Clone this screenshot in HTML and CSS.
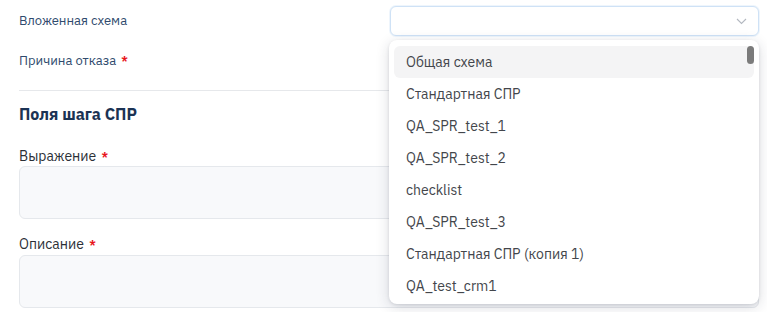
FILE: index.html
```html
<!DOCTYPE html>
<html lang="ru">
<head>
<meta charset="utf-8">
<title>Форма</title>
<link rel="stylesheet" href="styles.css">
</head>
<body>
<div class="page">
  <div class="row row-first">
    <div class="label label-blue">Вложенная схема</div>
    <div class="select">
      <svg class="chevron" width="11" height="7" viewBox="0 0 11 7"><path d="M1 1 L5.5 5.5 L10 1" fill="none" stroke="#b3b8c0" stroke-width="1.1"/></svg>
    </div>
  </div>
  <div class="row row-second">
    <div class="label label-blue">Причина отказа <span class="req">*</span></div>
    <div class="select select-hidden"></div>
  </div>
  <div class="divider"></div>
  <h2 class="heading">Поля шага СПР</h2>
  <div class="field-label">Выражение <span class="req">*</span></div>
  <div class="textbox"></div>
  <div class="field-label field-label-2">Описание <span class="req">*</span></div>
  <div class="textbox"></div>

  <div class="dropdown">
    <div class="item active">Общая схема</div>
    <div class="item">Стандартная СПР</div>
    <div class="item">QA_SPR_test_1</div>
    <div class="item">QA_SPR_test_2</div>
    <div class="item">checklist</div>
    <div class="item">QA_SPR_test_3</div>
    <div class="item">Стандартная СПР (копия 1)</div>
    <div class="item">QA_test_crm1</div>
    <div class="scroll-thumb"></div>
  </div>
</div>
</body>
</html>
```
FILE: styles.css
```css
html, body {
  margin: 0;
  padding: 0;
  background: #ffffff;
  font-family: "IBM Plex Sans", Roboto, "Noto Sans", sans-serif;
  font-size: 13px;
  overflow: hidden;
}
.page {
  position: relative;
  width: 740px;
  padding-left: 19px;
  padding-top: 6px;
  height: 306px;
}
.row {
  display: flex;
  align-items: center;
  height: 30px;
}
.row-second {
  margin-top: 9px;
}
.label {
  width: 371px;
  flex: none;
  line-height: 18px;
}
.label-blue {
  color: #2f4a6d;
}
.req {
  color: #e8141b;
  font-weight: 700;
  font-size: 11px;
  margin-left: 2px;
  vertical-align: 1px;
}
.select {
  position: relative;
  flex: 1;
  height: 28px;
  border: 1px solid #cfe2f6;
  border-radius: 6px;
  background: #fff;
  box-shadow: 0 0 0 1px #eef5fc;
}
.select-hidden {
  border-color: #e4e7eb;
  box-shadow: none;
}
.chevron {
  position: absolute;
  right: 11px;
  top: 11px;
}
.divider {
  margin-top: 15px;
  height: 1px;
  background: #e6e8eb;
}
.heading {
  margin: 13px 0 0;
  font-size: 16px;
  line-height: 20px;
  font-weight: 700;
  color: #1b3354;
}
.field-label {
  margin-top: 23px;
  line-height: 18px;
  font-size: 14px;
  color: #2b2f36;
  margin-bottom: 1px;
}
.field-label-2 {
  margin-top: 16px;
  margin-bottom: 2px;
}
.textbox {
  height: 51px;
  border: 1px solid #e5e8ec;
  border-radius: 6px;
  background: #f8f9fb;
}
.dropdown {
  position: absolute;
  left: 389px;
  top: 40px;
  width: 370px;
  height: 264px;
  box-sizing: border-box;
  padding: 6px 5px 0;
  background: #fff;
  border-radius: 8px;
  box-shadow: 0 3px 14px rgba(30, 40, 60, 0.16), 0 1px 3px rgba(30, 40, 60, 0.12);
  overflow: hidden;
}
.item {
  height: 32px;
  line-height: 32px;
  padding-left: 12px;
  font-size: 14px;
  color: #43464b;
  border-radius: 6px;
  white-space: nowrap;
}
.item.active {
  background: #f4f4f5;
}
.scroll-thumb {
  position: absolute;
  right: 5px;
  top: 6px;
  width: 7px;
  height: 18px;
  border-radius: 4px;
  background: #7b7b7b;
}
```
